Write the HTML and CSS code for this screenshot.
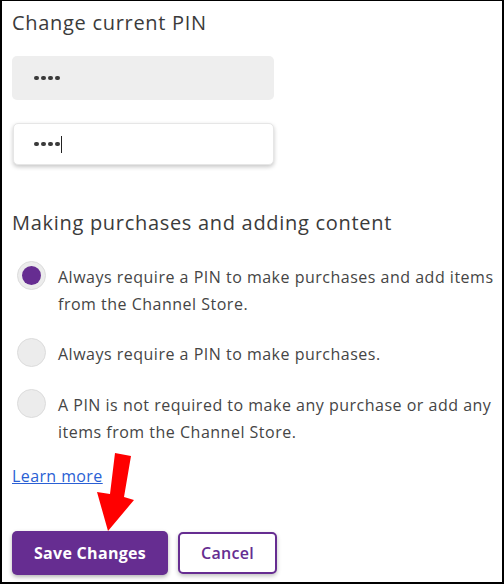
FILE: index.html
```html
<!DOCTYPE html>
<html>
<head>
<meta charset="utf-8">
<link rel="stylesheet" href="styles.css">
</head>
<body>
<div class="frame">
  <div class="content">
    <h2 class="title">Change current PIN</h2>
    <div class="field field-filled"><span class="dots"><i></i><i></i><i></i><i></i></span></div>
    <div class="field field-active"><span class="dots"><i></i><i></i><i></i><i></i></span><span class="caret"></span></div>

    <h2 class="title title-second">Making purchases and adding content</h2>
    <div class="options">
      <div class="option">
        <span class="radio radio-on"><span class="radio-dot"></span></span>
        <span class="option-text">Always require a PIN to make purchases and add items from the Channel Store.</span>
      </div>
      <div class="option">
        <span class="radio"></span>
        <span class="option-text">Always require a PIN to make purchases.</span>
      </div>
      <div class="option">
        <span class="radio"></span>
        <span class="option-text">A PIN is not required to make any purchase or add any items from the Channel Store.</span>
      </div>
    </div>

    <a class="learn" href="#">Learn more</a>

    <div class="actions">
      <button class="btn btn-primary">Save Changes</button>
      <button class="btn btn-secondary">Cancel</button>
    </div>
  </div>
  <svg class="arrow" width="504" height="584" viewBox="0 0 504 584">
    <polygon points="115,453 131,456 124,497 134,500 108,531 97,492 110,494" fill="#ff0000"/>
  </svg>
</div>
</body>
</html>
```

FILE: styles.css
```css
* { box-sizing: border-box; }
html, body { margin: 0; padding: 0; background: #fff; }
body { font-family: "Open Sans", "Noto Sans", sans-serif; color: #444; }

.frame {
  position: relative;
  width: 504px;
  height: 584px;
  border: 2px solid #000;
  border-top-width: 1px;
  overflow: hidden;
}
.content {
  padding: 8px 3px 0 10px;
}
.title {
  margin: 0;
  font-size: 20px;
  line-height: 27px;
  font-weight: 400;
  letter-spacing: 0.7px;
  color: #3b3b3b;
}
.field {
  width: 262px;
  height: 44px;
  border-radius: 5px;
  display: flex;
  align-items: center;
  padding-left: 22px;
}
.field-filled {
  margin-top: 20px;
  background: #eeeeee;
}
.field-active {
  margin-top: 23px;
  margin-left: 1px;
  width: 261px;
  height: 42px;
  background: #fff;
  border: 1px solid #e6e6e6;
  box-shadow: 0 2px 4px rgba(0,0,0,0.22);
  padding-left: 20px;
}
.dots {
  display: flex;
  gap: 2.5px;
  align-items: center;
}
.dots i {
  display: block;
  width: 4.5px;
  height: 4.5px;
  border-radius: 50%;
  background: #3a3a3a;
}
.caret {
  display: inline-block;
  width: 1px;
  height: 17px;
  background: #222;
  margin-left: 1px;
}
.title-second {
  margin-top: 44px;
}
.options {
  margin-top: 25px;
  display: flex;
  flex-direction: column;
  gap: 22px;
}
.option {
  display: flex;
  align-items: flex-start;
  gap: 12px;
}
.radio {
  flex: 0 0 29px;
  width: 29px;
  height: 29px;
  margin-left: 5px;
  border-radius: 50%;
  background: #ececec;
  border: 1px solid #dcdcdc;
  display: flex;
  align-items: center;
  justify-content: center;
}
.radio-dot {
  width: 19px;
  height: 19px;
  border-radius: 50%;
  background: #662d91;
}
.option-text {
  font-size: 16px;
  line-height: 27px;
  letter-spacing: 0.5px;
  margin-top: 3px;
  margin-bottom: -2px;
  color: #454545;
}
.learn {
  display: inline-block;
  margin-top: 22px;
  font-size: 16px;
  line-height: 20px;
  letter-spacing: 0.4px;
  color: #2a5fd4;
  text-decoration: underline;
}
.actions {
  margin-top: 44px;
  display: flex;
  gap: 10px;
  align-items: flex-start;
}
.btn {
  font-family: "Open Sans", "Noto Sans", sans-serif;
  font-size: 16px;
  border-radius: 5px;
  cursor: pointer;
}
.btn-primary {
  width: 156px;
  height: 44px;
  background: #662d91;
  color: #fff;
  font-weight: 700;
  letter-spacing: 0.3px;
  border: none;
  box-shadow: 0 2px 4px rgba(0,0,0,0.3);
}
.btn-secondary {
  width: 99px;
  height: 42px;
  margin-top: 1px;
  background: #fff;
  color: #662d91;
  font-weight: 600;
  letter-spacing: 0.3px;
  border: 2px solid #662d91;
  box-shadow: 0 2px 4px rgba(0,0,0,0.25);
}
.arrow {
  position: absolute;
  left: -2px;
  top: -1px;
  pointer-events: none;
}
```
